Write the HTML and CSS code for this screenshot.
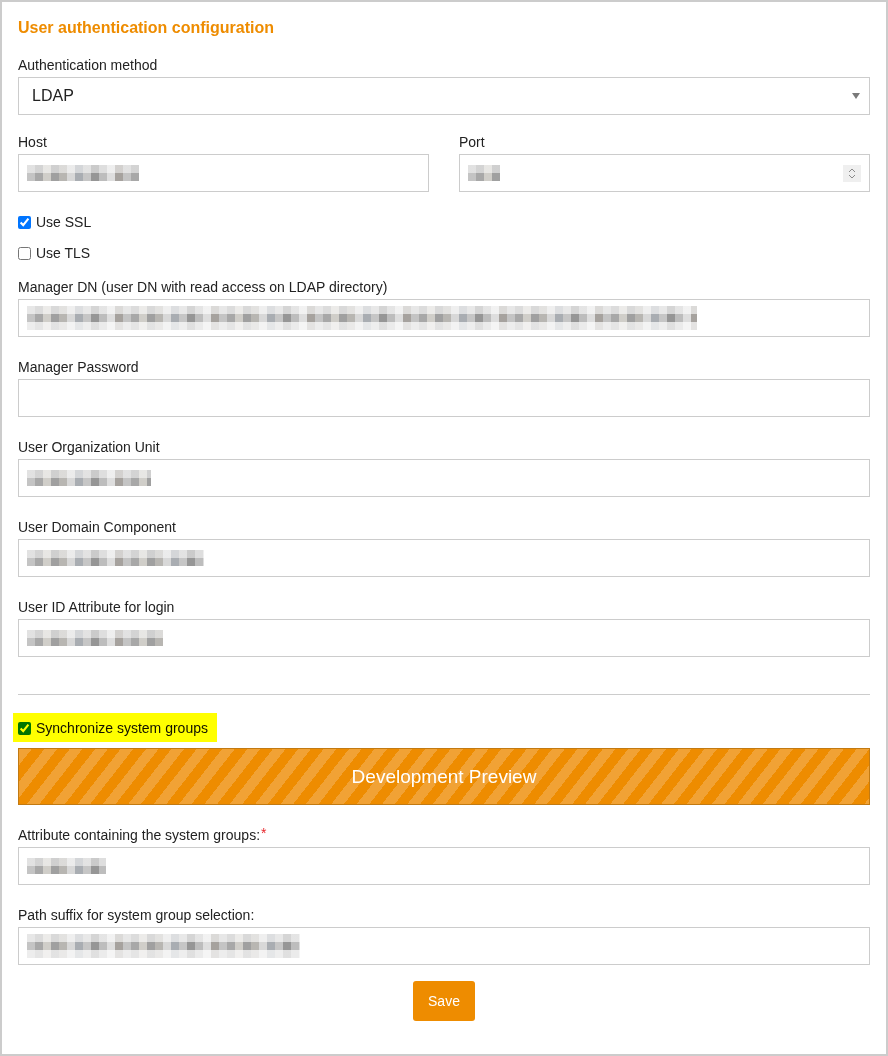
FILE: index.html
```html
<!DOCTYPE html>
<html lang="en">
<head>
<meta charset="utf-8">
<title>User authentication configuration</title>
<link rel="stylesheet" href="styles.css">
</head>
<body>
<div class="frame">
  <h1 class="title">User authentication configuration</h1>

  <div class="field field-auth">
    <label class="label">Authentication method</label>
    <div class="input select">
      <span class="select-value">LDAP</span>
      <span class="caret"></span>
    </div>
  </div>

  <div class="row-2">
    <div class="field-plain">
      <label class="label">Host</label>
      <div class="input"><span class="blur w-host"></span></div>
    </div>
    <div class="field-plain">
      <label class="label">Port</label>
      <div class="input input-number">
        <span class="blur w-port"></span>
        <svg class="spinner" width="18" height="17" viewBox="0 0 18 17">
          <rect x="0" y="0" width="18" height="17" fill="#efefef"/>
          <path d="M6 7 L9 4 L12 7" fill="none" stroke="#8a8a8a" stroke-width="1"/>
          <path d="M6 10 L9 13 L12 10" fill="none" stroke="#8a8a8a" stroke-width="1"/>
        </svg>
      </div>
    </div>
  </div>

  <label class="check check-ssl"><input type="checkbox" checked> <span>Use SSL</span></label>
  <label class="check check-tls"><input type="checkbox"> <span>Use TLS</span></label>

  <div class="field">
    <label class="label">Manager DN (user DN with read access on LDAP directory)</label>
    <div class="input"><span class="blur blur-3 w-dn"></span></div>
  </div>

  <div class="field">
    <label class="label">Manager Password</label>
    <div class="input"></div>
  </div>

  <div class="field">
    <label class="label">User Organization Unit</label>
    <div class="input"><span class="blur w-ou"></span></div>
  </div>

  <div class="field">
    <label class="label">User Domain Component</label>
    <div class="input"><span class="blur w-dc"></span></div>
  </div>

  <div class="field field-last">
    <label class="label">User ID Attribute for login</label>
    <div class="input"><span class="blur w-uid"></span></div>
  </div>

  <hr class="sep">

  <div class="highlight">
    <label class="check check-sync"><input type="checkbox" checked> <span>Synchronize system groups</span></label>
  </div>

  <div class="preview">Development Preview</div>

  <div class="field">
    <label class="label">Attribute containing the system groups:<span class="req">*</span></label>
    <div class="input"><span class="blur w-attr"></span></div>
  </div>

  <div class="field field-path">
    <label class="label">Path suffix for system group selection:</label>
    <div class="input"><span class="blur blur-3 w-path"></span></div>
  </div>

  <div class="actions">
    <button class="btn-save" type="button">Save</button>
  </div>
</div>
</body>
</html>
```

FILE: styles.css
```css
html, body {
  margin: 0;
  padding: 0;
  background: #ffffff;
}

body {
  font-family: "Liberation Sans", Arial, sans-serif;
  color: #222222;
  font-size: 14px;
}

.frame {
  box-sizing: border-box;
  width: 888px;
  height: 1056px;
  border: 2px solid #cccccc;
  padding: 17px 16px 0 16px;
}

.title {
  margin: 0 0 20px 0;
  font-size: 16px;
  line-height: 18px;
  font-weight: bold;
  color: #ee8c00;
}

.label {
  display: block;
  font-size: 14px;
  line-height: 16px;
  margin-bottom: 4px;
  color: #222222;
}

.req {
  color: #e8262b;
  position: relative;
  top: -2px;
  margin-left: 1px;
}

.field {
  margin-bottom: 22px;
}

.field-auth {
  margin-bottom: 19px;
}

.field-last {
  margin-bottom: 37px;
}

.field-path {
  margin-bottom: 16px;
}

.input {
  box-sizing: border-box;
  height: 38px;
  border: 1px solid #cccccc;
  background: #ffffff;
  display: flex;
  align-items: center;
  padding: 0 8px;
}

.select {
  padding: 0 9px 0 13px;
  justify-content: space-between;
}

.select-value {
  font-size: 16px;
  color: #222222;
}

.caret {
  width: 0;
  height: 0;
  border-left: 4px solid transparent;
  border-right: 4px solid transparent;
  border-top: 6px solid #7a7a7a;
}

.input-number {
  justify-content: space-between;
}

.spinner {
  display: block;
}

.row-2 {
  display: grid;
  grid-template-columns: 1fr 1fr;
  column-gap: 30px;
  margin-bottom: 22px;
}

.check {
  display: flex;
  align-items: center;
  height: 16px;
  font-size: 14px;
  line-height: 16px;
  color: #222222;
}

.check input {
  width: 13px;
  height: 13px;
  margin: 0 5px 0 0;
}

.check-ssl {
  margin-bottom: 15px;
}

.check-tls {
  margin-bottom: 18px;
}

.sep {
  border: 0;
  border-top: 1px solid #cccccc;
  height: 0;
  margin: 0 0 18px 0;
}

.highlight {
  display: inline-flex;
  align-items: center;
  box-sizing: border-box;
  height: 29px;
  margin-left: -5px;
  padding: 1px 9px 0 5px;
  background: #ffff00;
  margin-bottom: 6px;
  vertical-align: top;
}

.check-sync input {
  mix-blend-mode: multiply;
}

.check-sync {
  color: #111100;
}

.preview {
  box-sizing: border-box;
  height: 57px;
  border: 1px solid #c27a12;
  background-color: #ee8c00;
  background-image: repeating-linear-gradient(128deg,
    #f1a235 0 10px, #ee8c00 10px 20px);
  color: #ffffff;
  font-size: 19px;
  display: flex;
  align-items: center;
  justify-content: center;
  margin-bottom: 22px;
}

.actions {
  display: flex;
  justify-content: center;
}

.btn-save {
  width: 62px;
  height: 40px;
  border: 0;
  border-radius: 3px;
  background: #ee8c00;
  color: #ffffff;
  font-family: "Liberation Sans", Arial, sans-serif;
  font-size: 14px;
  padding: 0;
}

/* pixelated (redacted) values */
.blur {
  display: block;
  height: 16px;
  background-image:
    linear-gradient(to bottom, rgba(255,255,255,0.5) 0 8px, rgba(255,255,255,0) 8px 16px),
    repeating-linear-gradient(90deg,
      #c4c4c4 0 8px, #a8a8a8 8px 16px, #d0cec9 16px 24px, #a0a0a0 24px 32px,
      #b8b6b2 32px 40px, #d8d8d8 40px 48px, #a9adb2 48px 56px, #c6c6c6 56px 64px,
      #969696 64px 72px, #bdbdbd 72px 80px, #dedede 80px 88px, #a6a29e 88px 96px);
}

.blur-3 {
  height: 24px;
  background-image:
    linear-gradient(to bottom, rgba(255,255,255,0.6) 0 8px, rgba(255,255,255,0) 8px 16px, rgba(255,255,255,0.7) 16px 24px),
    repeating-linear-gradient(90deg,
      #c4c4c4 0 8px, #a8a8a8 8px 16px, #d0cec9 16px 24px, #a0a0a0 24px 32px,
      #b8b6b2 32px 40px, #d8d8d8 40px 48px, #a9adb2 48px 56px, #c6c6c6 56px 64px,
      #969696 64px 72px, #bdbdbd 72px 80px, #dedede 80px 88px, #a6a29e 88px 96px);
}

.w-host { width: 112px; }
.w-port { width: 32px; }
.w-dn { width: 670px; }
.w-ou { width: 124px; }
.w-dc { width: 177px; }
.w-uid { width: 136px; }
.w-attr { width: 79px; }
.w-path { width: 273px; }
```
